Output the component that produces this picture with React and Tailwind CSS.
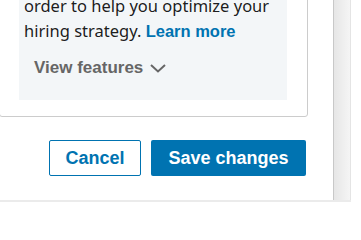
export default function App() {
  return (
    <div className="w-[361px] h-[213px] bg-white overflow-hidden">
      <div className="flex w-[351px] h-[202px] border-b-2 border-[#ebebeb]">
        <div className="w-[333px] flex flex-col overflow-hidden">
          {/* features box */}
          <div className="-ml-px mt-[-10px] w-[309px] shrink-0 border border-[#cccccc] rounded-[3px] pl-[19px] pr-[20px] pb-[16px]">
            <div className="bg-[#f3f6f8] pl-[5px] pt-[2px] pb-[22px]">
              <p className="text-[16.5px] leading-[25px] text-[rgba(0,0,0,0.9)] font-['Noto_Sans',sans-serif]">
                order to help you optimize your hiring strategy.{' '}
                <a className="font-bold text-[#0073b1] font-['Liberation_Sans',Arial,sans-serif]">Learn more</a>
              </p>
              <button className="mt-[14px] ml-[10px] flex items-center gap-[7px] text-[17px] leading-[20px] font-bold text-[#666666] font-['Liberation_Sans',Arial,sans-serif]">
                View features
                <svg width="16" height="9" viewBox="0 0 16 9" fill="none">
                  <polyline points="1,1 8,7.5 15,1" stroke="#666666" strokeWidth="2" />
                </svg>
              </button>
            </div>
          </div>
          {/* actions */}
          <div className="flex justify-end gap-[10px] pr-[27px] mt-[23px] font-['Liberation_Sans',Arial,sans-serif]">
            <button className="w-[92px] h-[36px] border border-[#0073b1] rounded-[2px] text-[18px] font-bold text-[#0073b1] bg-white">
              Cancel
            </button>
            <button className="w-[155px] h-[36px] rounded-[2px] bg-[#0073b1] text-[18px] font-bold text-white">
              Save changes
            </button>
          </div>
        </div>
        {/* scrollbar track */}
        <div className="w-[18px] border-l border-[#c8c8c8] border-r border-r-[#e4e4e4] bg-gradient-to-r from-[#e6e6e6] to-[#f5f5f5]" />
      </div>
    </div>
  );
}
